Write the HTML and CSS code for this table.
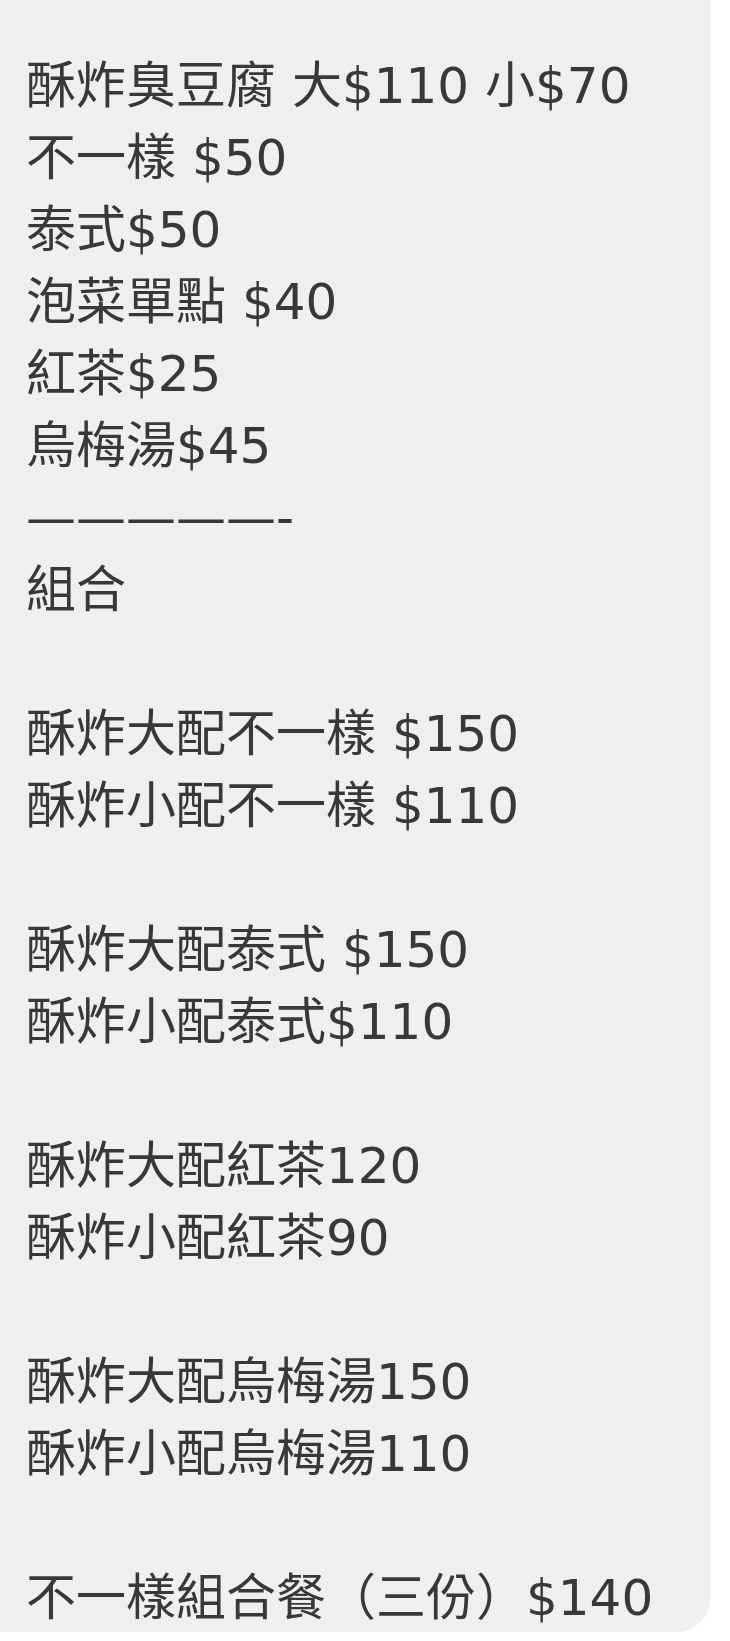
FILE: index.html
```html
<!DOCTYPE html>
<html lang="zh-Hant">
<head>
  <meta charset="UTF-8">
  <meta name="viewport" content="width=device-width, initial-scale=1.0">
  <title>菜單</title>
  <link rel="stylesheet" href="styles.css">
</head>
<body>
  <div class="bubble">
    <p class="line">酥炸臭豆腐 大$110 小$70</p>
    <p class="line">不一樣 $50</p>
    <p class="line">泰式$50</p>
    <p class="line">泡菜單點 $40</p>
    <p class="line">紅茶$25</p>
    <p class="line">烏梅湯$45</p>
    <p class="line divider">—————-</p>
    <p class="line">組合</p>
    <p class="line blank"></p>
    <p class="line">酥炸大配不一樣 $150</p>
    <p class="line">酥炸小配不一樣 $110</p>
    <p class="line blank"></p>
    <p class="line">酥炸大配泰式 $150</p>
    <p class="line">酥炸小配泰式$110</p>
    <p class="line blank"></p>
    <p class="line">酥炸大配紅茶120</p>
    <p class="line">酥炸小配紅茶90</p>
    <p class="line blank"></p>
    <p class="line">酥炸大配烏梅湯150</p>
    <p class="line">酥炸小配烏梅湯110</p>
    <p class="line blank"></p>
    <p class="line">不一樣組合餐（三份）$140</p>
  </div>
</body>
</html>
```

FILE: styles.css
```css
body {
  margin: 0;
  padding: 0;
  background: #fff;
  font-family: "DejaVu Sans", "Noto Sans CJK TC", sans-serif;
}

.bubble {
  width: 684px;
  padding: 50px 0 0 26px;
  height: 1582px;
  background-color: #efefef;
  border-bottom-right-radius: 34px;
  box-shadow: 1px 0 2px rgba(0, 0, 0, 0.04);
  color: #383838;
}

.line {
  margin: 0;
  font-size: 50px;
  line-height: 72px;
  height: 72px;
  white-space: nowrap;
}

.divider {
  font-size: 50px;
}
```
